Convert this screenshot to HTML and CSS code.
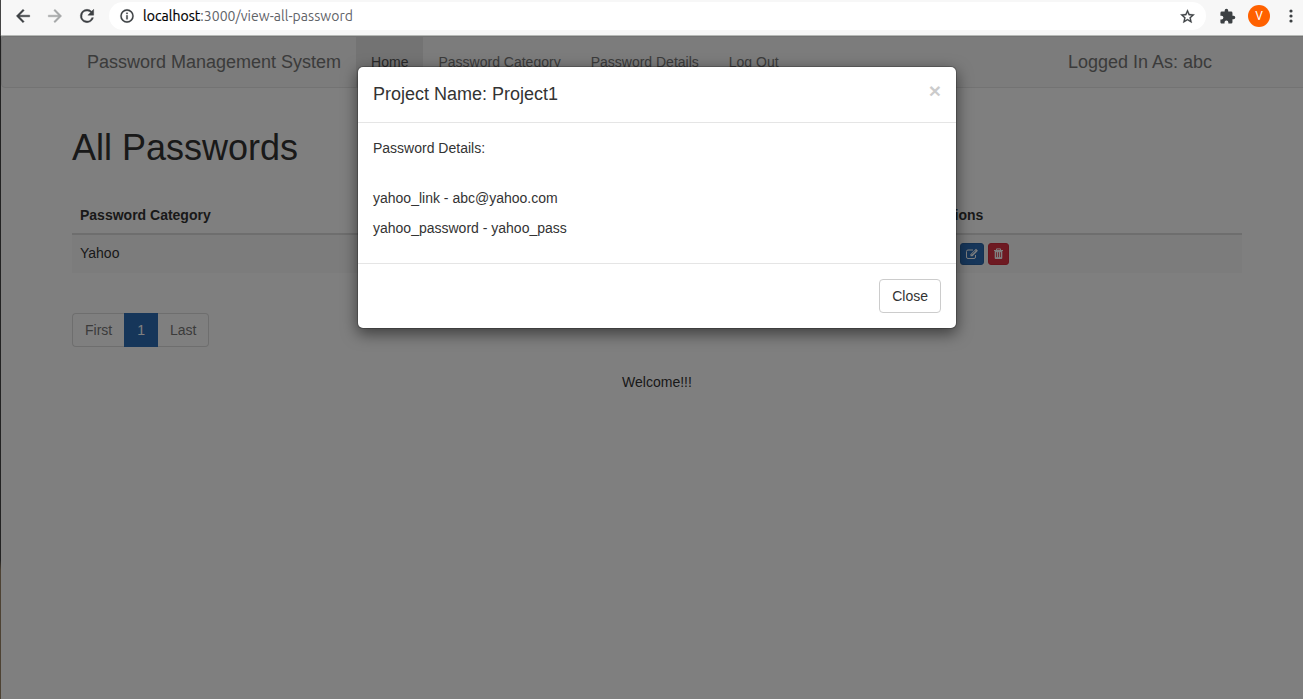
FILE: index.html
```html
<!DOCTYPE html>
<html lang="en">
<head>
<meta charset="utf-8">
<title>Password Management System</title>
<link rel="stylesheet" href="styles.css">
</head>
<body>
<div class="window">
  <div class="toolbar">
    <svg class="tool back" viewBox="0 0 24 24"><path d="M20 11H7.83l5.59-5.59L12 4l-8 8 8 8 1.41-1.41L7.83 13H20v-2z"/></svg>
    <svg class="tool forward" viewBox="0 0 24 24"><path d="M12 4l-1.41 1.41L16.17 11H4v2h12.17l-5.58 5.59L12 20l8-8z"/></svg>
    <svg class="tool reload" viewBox="0 0 24 24"><path d="M17.65 6.35A7.96 7.96 0 0 0 12 4a8 8 0 1 0 7.73 10h-2.08A6 6 0 1 1 12 6c1.66 0 3.14.69 4.22 1.78L13 11h7V4z"/></svg>
    <div class="address">
      <svg class="info" viewBox="0 0 24 24"><path d="M11 17h2v-6h-2v6zm1-15a10 10 0 1 0 0 20 10 10 0 0 0 0-20zm0 18a8 8 0 1 1 0-16 8 8 0 0 1 0 16zM11 9h2V7h-2v2z"/></svg>
      <span class="url"><b>localhost</b>:3000/view-all-password</span>
      <svg class="star" viewBox="0 0 24 24"><path d="M22 9.24l-7.19-.62L12 2 9.19 8.63 2 9.24l5.46 4.73L5.82 21 12 17.27 18.18 21l-1.63-7.03L22 9.24zM12 15.4l-3.76 2.27 1-4.28-3.32-2.88 4.38-.38L12 6.1l1.71 4.04 4.38.38-3.32 2.88 1 4.28L12 15.4z"/></svg>
    </div>
    <svg class="puzzle" viewBox="0 0 24 24"><path d="M20.5 11H19V7a2 2 0 0 0-2-2h-4V3.5a2.5 2.5 0 0 0-5 0V5H4a2 2 0 0 0-2 2v3.8h1.5a2.7 2.7 0 0 1 0 5.4H2V20c0 1.1.9 2 2 2h3.8v-1.5a2.7 2.7 0 0 1 5.4 0V22H17a2 2 0 0 0 2-2v-4h1.5a2.5 2.5 0 0 0 0-5z"/></svg>
    <span class="avatar">V</span>
    <svg class="dots" viewBox="0 0 4 14"><circle cx="2" cy="2" r="1.6"/><circle cx="2" cy="7" r="1.6"/><circle cx="2" cy="12" r="1.6"/></svg>
  </div>
  <div class="viewport">
    <div class="page">
      <nav class="navbar">
        <div class="container nav-row">
          <span class="brand">Password Management System</span>
          <a class="nav-link active">Home</a>
          <a class="nav-link">Password Category</a>
          <a class="nav-link">Password Details</a>
          <a class="nav-link">Log Out</a>
          <span class="brand user">Logged In As: abc</span>
        </div>
      </nav>
      <main class="container">
        <h1>All Passwords</h1>
        <table class="table">
          <thead><tr><th class="category">Password Category</th><th>Actions</th></tr></thead>
          <tbody><tr>
            <td>Yahoo</td>
            <td><div class="actions">
              <span class="btn-xs"><svg width="12" height="12" viewBox="0 0 16 16"><path d="M1 8q7-8 14 0q-7 8-14 0z" fill="none" stroke="#fff" stroke-width="1.5"/><circle cx="8" cy="8" r="2.5" fill="#fff"/></svg></span>
              <span class="btn-xs"><svg width="14" height="12" viewBox="0 0 14 12"><path d="M10.5 7v2q0 1.500-1.500 1.500H3Q1.500 10.500 1.500 9V3.500Q1.500 2 3 2h5" fill="none" stroke="#fff"/><path d="M5.500 8.200V6.200L11 .8l1.900 1.900L7.500 8.200z" fill="#fff"/><path d="M6.800 6.500l3.800-3.900" stroke="#2d6cb4" stroke-width=".8"/></svg></span>
              <span class="btn-xs danger"><svg width="11" height="12" viewBox="0 0 11 12"><path d="M3.500 2V.9h4V2M1 2.500h9" fill="none" stroke="#fff"/><path d="M1.700 3h7.600v6.800q0 1.200-1 1.200H2.700q-1 0-1-1.200z" fill="#fff"/><path d="M3.500 4.200v5M5.500 4.200v5M7.500 4.200v5" stroke="#dc3545" stroke-width=".8"/></svg></span>
            </div></td>
          </tr></tbody>
        </table>
        <div class="pagination"><span>First</span><span class="current">1</span><span>Last</span></div>
        <p class="welcome">Welcome!!!</p>
      </main>
      <div class="backdrop">
        <section class="modal">
          <header class="modal-header"><h4>Project Name: Project1</h4><span class="close">×</span></header>
          <div class="modal-body">
            <p>Password Details:</p>
            <br>
            <p>yahoo_link - abc@yahoo.com</p>
            <p>yahoo_password - yahoo_pass</p>
          </div>
          <footer class="modal-footer"><button class="btn">Close</button></footer>
        </section>
      </div>
    </div>
  </div>
</div>
</body>
</html>
```
FILE: styles.css
```css
* { box-sizing: border-box; }
body { margin: 0; overflow: hidden; font: 14px/20px "Liberation Sans", Arial, sans-serif; color: #333; }
.window { height: 699px; padding-left: 1px; overflow: hidden; background: linear-gradient(#444 0 36px, #222 36px 560px, #4d4233 570px); }
.toolbar { display: flex; align-items: center; height: 36px; padding: 0 10px 3px 12px; background: #f7f7f7; border-bottom: 1px solid #b6b9b6; }
.toolbar svg { flex: none; fill: #3c4043; }
.tool { width: 20px; height: 20px; margin-right: 12px; stroke: #3c4043; stroke-width: .5; }
.toolbar .forward { fill: #a5a7a8; stroke: #a5a7a8; }
.address { display: flex; align-items: center; flex: 1; height: 28px; margin-right: 13px; padding: 0 10px; border-radius: 14px; background: #fff; }
.info { width: 16px; height: 16px; margin-right: 8px; stroke: #3c4043; stroke-width: .4; }
.url { flex: 1; font: 14px/20px Ubuntu, "Noto Sans", sans-serif; letter-spacing: .04px; color: #5f6368; }
.url b { font-weight: 400; color: #000; -webkit-text-stroke: .2px #000; }
.star { width: 17px; height: 17px; stroke: #3c4043; stroke-width: .4; }
.puzzle { width: 17px; height: 17px; margin-right: 12px; }
.avatar { width: 22px; height: 22px; margin-right: 19px; border-radius: 50%; background: #ff6100; color: #fff; font: 12px/22px Roboto, sans-serif; text-align: center; }
.dots { width: 4px; height: 14px; }
.viewport { height: 663px; overflow: hidden; }
.page { position: relative; width: 1312px; height: 663px; background: #fff; }
.container { width: 1170px; margin: 0 auto; }
.navbar { height: 52px; border: 1px solid #e7e7e7; border-radius: 4px; background: #f8f8f8; }
.nav-row { display: flex; height: 50px; }
.brand { padding: 15px; font-size: 18px; color: #777; }
.user { margin-left: auto; margin-right: 15px; }
.nav-link { padding: 15px; color: #777; }
.nav-link.active { color: #555; background: #e7e7e7; }
h1 { margin: 40px 0 29px; font-size: 36px; font-weight: 500; line-height: 40px; }
.table { width: 100%; border-collapse: separate; border-spacing: 0; table-layout: fixed; }
.table th, .table td { padding: 8px; text-align: left; vertical-align: top; line-height: 20px; }
.table th { border-bottom: 2px solid #ddd; }
.category { width: 852px; }
.table td { height: 38px; background: #f9f9f9; }
.actions { display: flex; gap: 4px; }
.btn-xs { display: flex; align-items: center; justify-content: center; width: 24px; height: 22px; border: 1px solid #2862a3; border-radius: 3px; background: #2d6cb4; }
.btn-xs.danger { width: 21px; background: #dc3545; border-color: #d02c3d; }
.pagination { display: flex; margin-top: 40px; }
.pagination span { padding: 6px 12px; border: 1px solid #ddd; color: #777; }
.pagination span:first-child { border-right: 0; border-radius: 4px 0 0 4px; }
.pagination span:last-child { border-left: 0; border-radius: 0 4px 4px 0; }
.pagination .current { background: #2d6cb4; border-color: #2d6cb4; color: #fff; }
.welcome { margin: 25px 0 0; text-align: center; }
.backdrop { position: absolute; inset: 0; padding-top: 30px; background: rgba(0,0,0,.5); }
.modal { width: 600px; margin: 0 auto; border: 1px solid rgba(0,0,0,.2); border-radius: 6px; background: #fff; background-clip: padding-box; box-shadow: 0 5px 15px rgba(0,0,0,.5); }
.modal-header { display: flex; justify-content: space-between; padding: 15px; height: 56px; border-bottom: 1px solid #e5e5e5; }
h4 { margin: 0; font-size: 18px; line-height: 24px; font-weight: 500; }
.close { margin-top: -2px; font-size: 21px; line-height: 21px; font-weight: 700; color: #000; opacity: .2; }
.modal-body { padding: 15px; }
.modal-body p { margin: 0 0 10px; }
.modal-footer { padding: 15px; border-top: 1px solid #e5e5e5; text-align: right; }
.btn { display: block; margin-left: auto; height: 34px; padding: 6px 12px; border: 1px solid #ccc; border-radius: 4px; background: #fff; color: #333; font: inherit; }
```
